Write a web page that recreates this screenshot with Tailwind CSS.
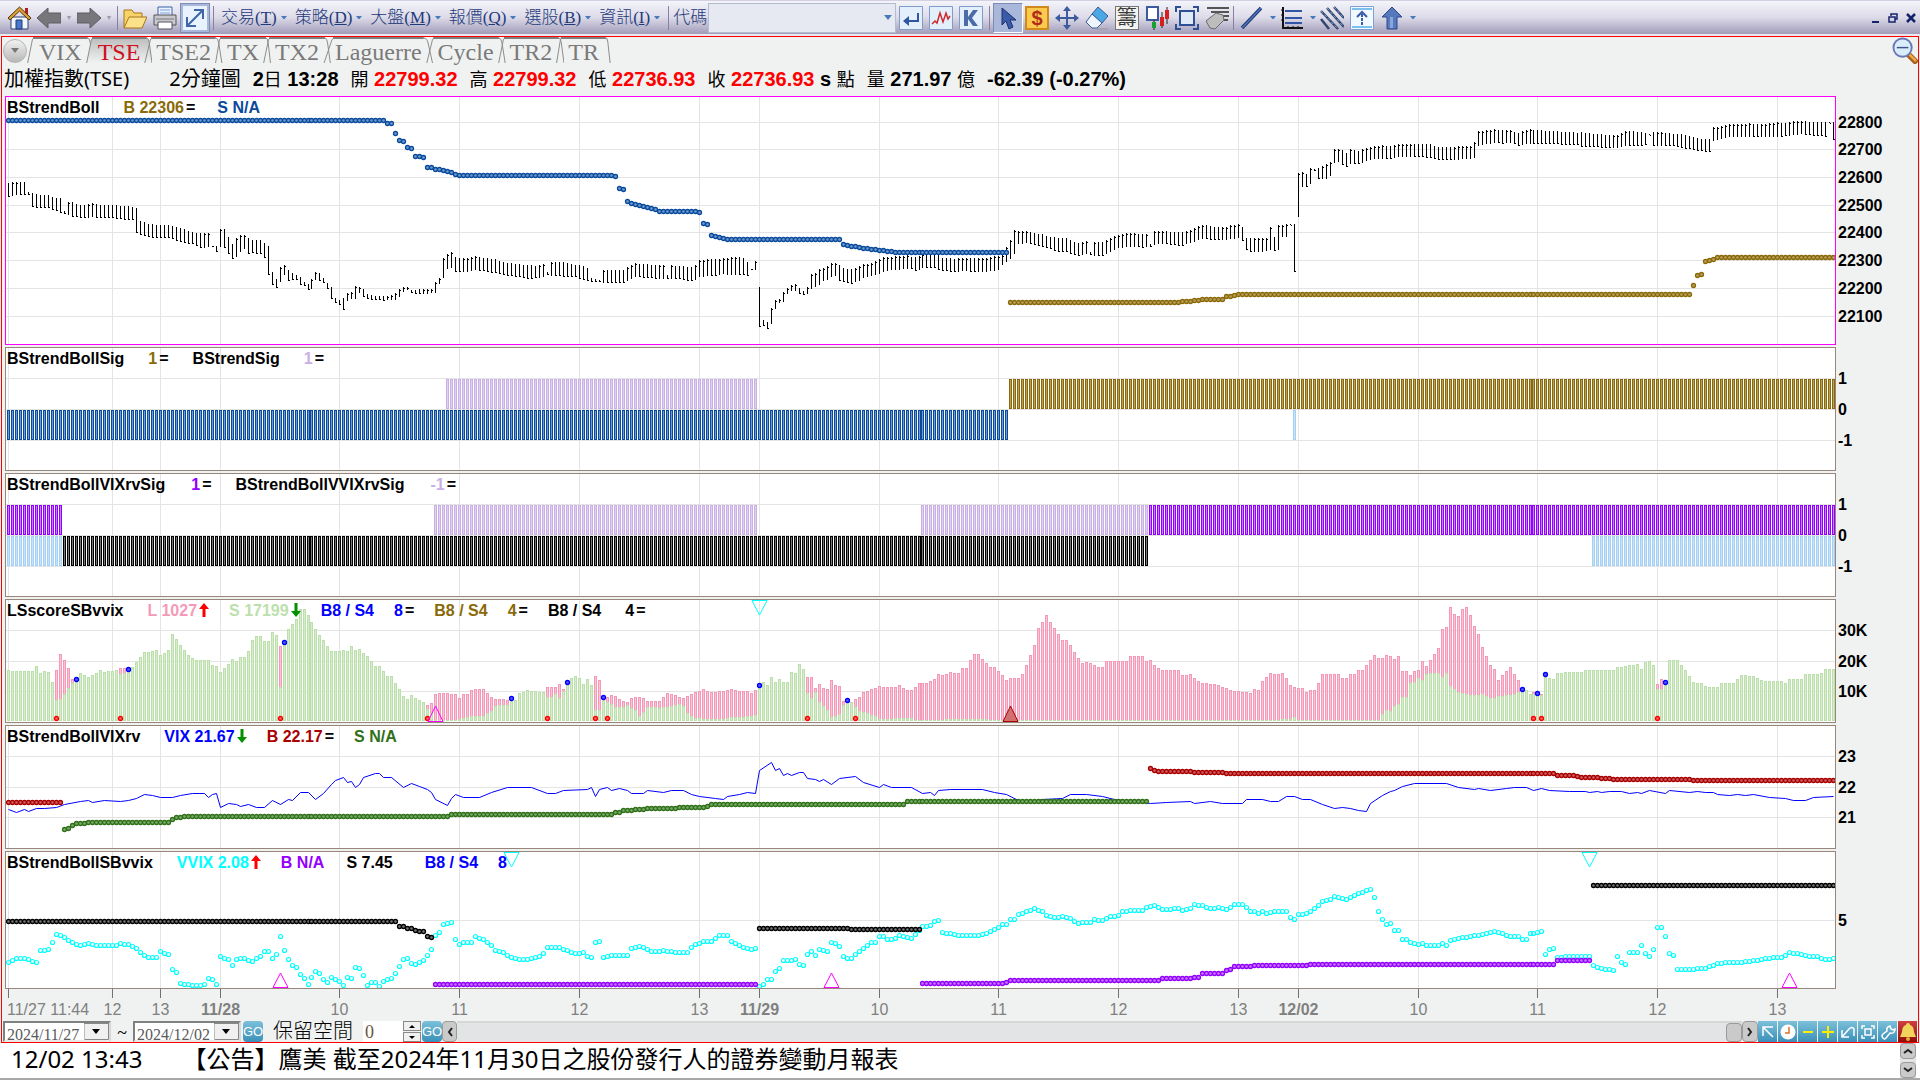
<!DOCTYPE html>
<html lang="zh-Hant">
<head>
  <meta charset="UTF-8">
  <title>加權指數(TSE)</title>
  <meta name="viewport" content="width=device-width, initial-scale=1">
  <script src="https://cdn.jsdelivr.net/npm/@tailwindcss/browser@4"></script>
</head>
<body class="min-h-screen bg-[#f0f2f1] text-black font-['Liberation_Sans','Noto_Sans_CJK_TC',sans-serif] overflow-x-hidden">

  <!-- ========== TOOLBAR ========== -->
  <header class="h-9 flex items-center pl-[7px] pr-1 border-t border-[#d4d0e4] bg-linear-to-b from-[#f4f4fa] via-[#dcdbe8] to-[#a29cba] text-[#1f3a7a] border-b-2 border-b-[#e8e8ee] font-['Liberation_Serif','Noto_Sans_CJK_TC',serif]">
    <button aria-label="Home" class="w-6 h-6 shrink-0">
      <svg viewBox="0 0 24 24" class="size-6"><path d="M18 2h3v7h-3z" fill="#b02020"/><path d="M4 11h17v12H4z" fill="#f4f6fb" stroke="#28427c"/><path d="M12.500 1L24 12l-2 2-9.500-9L3 14l-2-2z" fill="#e0a030" stroke="#4a3410"/><path d="M9 14h6v9H9z" fill="#4a78c8" stroke="#1d3a7c"/></svg>
    </button>
    <button aria-label="Back" class="w-6 h-6 ml-1.5 shrink-0"><svg viewBox="0 0 24 24" class="size-6"><path d="M0 12L11 2v5h13v10H11v5z" fill="#77777b" stroke="#5c5c62"/></svg></button>
    <span class="w-4 text-center text-[8px] text-[#9a9aa6] font-['DejaVu_Sans']">▾</span>
    <button aria-label="Forward" class="w-6 h-6 shrink-0"><svg viewBox="0 0 24 24" class="size-6"><path d="M24 12L13 2v5H0v10h13v5z" fill="#77777b" stroke="#5c5c62"/></svg></button>
    <span class="w-4 text-center text-[8px] text-[#9a9aa6] font-['DejaVu_Sans']">▾</span>
    <span class="w-px h-6 bg-[#8880a4] mr-[5px]"></span>
    <button aria-label="Open" class="w-6 h-6 shrink-0"><svg viewBox="0 0 24 24" class="size-6"><path d="M1 22V4h8l2 3h8v4" fill="#f8d468" stroke="#a8741c"/><path d="M1 22L6 11h18l-5 11z" fill="#fbe28a" stroke="#a8741c"/></svg></button>
    <button aria-label="Print" class="w-6 h-6 ml-1.5 shrink-0"><svg viewBox="0 0 24 24" class="size-6"><path d="M5 1h14v9H5z" fill="#eaf2ff" stroke="#3a62a8"/><path d="M7 4h10M7 7h10" stroke="#7aa0d8"/><path d="M1 9h22v10H1z" fill="#c9c9cd" stroke="#55555c"/><path d="M5 16h14v7H5z" fill="#fff" stroke="#55555c"/><path d="M3 13h18" stroke="#77777e"/></svg></button>
    <button aria-label="Fit" class="w-[30px] h-[30px] ml-[3px] grid place-items-center bg-[#a9b8da] border border-[#7d8cb4] shrink-0"><svg viewBox="0 0 24 24" class="size-6"><path d="M0 0h24v24H0z" fill="#e9f3ff"/><path d="M5 19L19 5M11 4h9v9M4 11v9h9" fill="none" stroke="#3f66a8" stroke-width="2"/></svg></button>
    <span class="w-px h-6 bg-[#8880a4] ml-[3px] mr-[7px]"></span>

    <nav class="flex text-[17px] font-light whitespace-nowrap" id="menus"></nav>

    <span class="w-px h-6 bg-[#8880a4] mr-1"></span>
    <label for="code" class="text-[17px] font-light whitespace-nowrap">代碼</label>
    <span class="relative w-[188px] h-[30px] ml-px shrink-0">
      <input id="code" class="w-full h-full bg-[#e6e9f2] border border-[#b4bccf] px-2 outline-none">
      <svg viewBox="0 0 8 5" class="absolute right-1 top-3 w-2"><path d="M0 0h8L4 5z" fill="#4a7ab8"/></svg>
    </span>
    <div class="flex items-center gap-1.5 ml-[3px] shrink-0">
      <button aria-label="Enter"><svg viewBox="0 0 24 24" class="size-6"><path d="M.5.5h23v23H.5z" fill="#e4effc" stroke="#7f9ccc"/><path d="M10 10v10l-6-5z" fill="#2f55a4"/><path d="M8 15h11V7" fill="none" stroke="#2f55a4" stroke-width="2"/></svg></button>
      <button aria-label="Tick chart"><svg viewBox="0 0 24 24" class="size-6"><path d="M.5.5h23v23H.5z" fill="#e4effc" stroke="#7f9ccc"/><path d="M3 18l3-3 2 2 3-10 3 9 3-9 2 6 2-3" fill="none" stroke="#cc2a2a" stroke-width="1.500"/></svg></button>
      <button aria-label="K line"><svg viewBox="0 0 24 24" class="size-6"><path d="M.5.5h23v23H.5z" fill="#e4effc" stroke="#7f9ccc"/><path d="M5 4h4v7l5-7h5l-6 8 6 8h-5l-5-7v7H5z" fill="#4a6aa8"/></svg></button>
      <span class="w-px h-6 bg-[#8880a4] -mr-[3px]"></span>
      <button aria-label="Select" class="w-[30px] h-[30px] grid place-items-center bg-[#a9b8da] border border-[#7d8cb4] border-b-white border-r-white -mr-1"><svg viewBox="0 0 24 24" class="size-6"><path d="M6 2v17l4-4 3 8 4-2-3-7h6z" fill="#3a5ba8" stroke="#1d3070"/></svg></button>
      <button aria-label="Trade"><svg viewBox="0 0 24 24" class="size-6"><path d="M1 1h22v22H1z" fill="#fbc94e" stroke="#d08a1c" stroke-width="2"/><text x="12" y="19" text-anchor="middle" font-family="Liberation Sans" font-size="20" font-weight="bold" fill="#b02c18">$</text></svg></button>
      <button aria-label="Move"><svg viewBox="0 0 24 24" class="size-6"><path d="M12 3v18M3 12h18" stroke="#3c5a9c" stroke-width="2"/><path d="M12 0l4 5H8zM12 24l4-5H8zM0 12l5-4v8zM24 12l-5-4v8z" fill="#3c5a9c"/></svg></button>
      <button aria-label="Eraser"><svg viewBox="0 0 24 24" class="size-6"><path d="M13 1l10 9-6 7L7 8z" fill="#4aa8e6" stroke="#3a5a90"/><path d="M7 8l10 9-5 5H7L1 16z" fill="#eef4fb" stroke="#3a5a90"/><path d="M11 23h12" stroke="#999"/></svg></button>
      <button class="w-6 h-6 bg-[#f2f2f0] border border-[#777] text-[20px] leading-[22px] text-[#3a3a3a] overflow-hidden"><span class="-ml-px">籌</span></button>
      <button aria-label="Candles"><svg viewBox="0 0 24 24" class="size-6"><path d="M2 1h11v13H2z" fill="#fff" stroke="#3c5a9c" stroke-width="2"/><path d="M9 14v10M17 6v16M22 1v17" stroke="#222"/><path d="M7 16h4v6H7z" fill="#18a030"/><path d="M15 11h4v9h-4zM20 4h4v9h-4z" fill="#d42020"/></svg></button>
      <button aria-label="Frame"><svg viewBox="0 0 24 24" class="size-6"><path d="M5 5h14v14H5z" fill="#dfe9f8" stroke="#2f4f94" stroke-width="2"/><path d="M1 6V1h5M18 1h5v5M23 18v5h-5M6 23H1v-5" fill="none" stroke="#2f4f94" stroke-width="2"/></svg></button>
      <button aria-label="Notify"><svg viewBox="0 0 24 24" class="size-6"><path d="M2 2h22M6 6h18M12 10h12M17 14h6" stroke="#555" stroke-width="2"/><path d="M1 15L11 7l7 2 1 5-9 9-5-1z" fill="#bdbdbd" stroke="#6b6b6b"/></svg></button>
      <span class="w-px h-6 bg-[#8880a4] -ml-0.5"></span>
      <button aria-label="Trend line"><svg viewBox="0 0 24 24" class="size-6"><path d="M2 22L21 2" stroke="#20386c" stroke-width="3.500"/><path d="M2 22L21 2" stroke="#4c74c0" stroke-width="1.500"/></svg></button>
      <svg viewBox="0 0 8 5" class="w-1.5 -mr-0.5"><path d="M0 0h8L4 5z" fill="#4a7ab8"/></svg>
      <button aria-label="Levels"><svg viewBox="0 0 24 24" class="size-6"><path d="M3 1v21h20" fill="none" stroke="#111" stroke-width="2"/><path d="M1 4h3M1 9h3M1 14h3M8 20v3M13 20v3M18 20v3" stroke="#111"/><path d="M5 5h17M5 12h17M5 17h17" stroke="#2f55a4" stroke-width="2"/></svg></button>
      <svg viewBox="0 0 8 5" class="w-1.5 -mr-0.5"><path d="M0 0h8L4 5z" fill="#4a7ab8"/></svg>
      <button aria-label="Channels"><svg viewBox="0 0 24 24" class="size-6"><path d="M1 5l17 18M7 2l17 19M14 1l10 11M1 13l8 10" stroke="#31466f" stroke-width="2.500"/><path d="M1 5l17 18M7 2l17 19M14 1l10 11" stroke="#86a0d0" stroke-width="1" stroke-dasharray="3 2"/></svg></button>
      <button aria-label="Zoom up"><svg viewBox="0 0 24 24" class="size-6"><path d="M.5.5h23v23H.5z" fill="#f2f8ff" stroke="#7fa0d4"/><path d="M2 3h20M2 21h20" stroke="#7cc0ee" stroke-width="2"/><path d="M7 11l5-5 5 5" fill="none" stroke="#3a5ba8" stroke-width="2"/><path d="M12 8v12" stroke="#3a5ba8" stroke-width="2" stroke-dasharray="3 1"/></svg></button>
      <button aria-label="Upload"><svg viewBox="0 0 24 24" class="size-6"><path d="M12 1l10 10h-5v12H7V11H2z" fill="#5678bc" stroke="#2b468c"/><path d="M10 11h3v11h-3z" fill="#88a5dc"/></svg></button>
      <svg viewBox="0 0 8 5" class="w-1.5"><path d="M0 0h8L4 5z" fill="#4a7ab8"/></svg>
    </div>
    <div class="flex items-center gap-2 ml-auto">
      <button aria-label="Minimize"><svg viewBox="0 0 9 10" class="w-[9px]"><path d="M1 8h7v2H1z" fill="#14246c"/></svg></button>
      <button aria-label="Restore"><svg viewBox="0 0 10 10" class="w-2.5"><path d="M3 3V1h6v5H7M1 4h6v5H1z" fill="none" stroke="#14246c" stroke-width="1.500"/></svg></button>
      <button aria-label="Close"><svg viewBox="0 0 10 10" class="w-2.5"><path d="M1 1l8 8M9 1L1 9" stroke="#14246c" stroke-width="2.500"/></svg></button>
    </div>
  </header>

  <!-- ========== CHART WINDOW ========== -->
  <main class="mx-px border border-[#ff0000]">
    <div class="h-[27px] flex items-center pl-px relative">
      <button aria-label="Tab list" class="size-6 rounded-full border border-[#b4b4b4] bg-linear-to-b from-[#f2f2f2] to-[#b8b8b8] grid place-items-center mr-1"><svg viewBox="0 0 8 5" class="w-2"><path d="M0 0h8L4 5z" fill="#777"/></svg></button>
      <nav id="tabs" class="flex h-full text-2xl leading-[30px] text-[#7a7a7a] font-['Liberation_Serif',serif]"></nav>
      <button aria-label="Zoom out" class="absolute right-0 top-0"><svg viewBox="0 0 28 28" class="size-[27px]"><path d="M18 18l9 9" stroke="#a8601c" stroke-width="6"/><path d="M19 18l7 7" stroke="#f0a848" stroke-width="2.500"/><circle cx="12" cy="11" r="9.500" fill="#d8ecfa" stroke="#6a78b4" stroke-width="2"/><path d="M6 11h12" stroke="#44518c" stroke-width="1.500"/></svg></button>
    </div>

    <div class="h-8 flex items-center gap-3 pl-0.5 pb-0.5 text-xl font-bold whitespace-nowrap">
      <h1 class="font-normal font-['Noto_Sans','Noto_Sans_CJK_TC',sans-serif] mr-7">加權指數(TSE)</h1>
      <span class="font-normal font-['Noto_Sans','Noto_Sans_CJK_TC',sans-serif]">2分鐘圖</span>
      <span>2<span class="text-lg font-normal">日</span> 13:28</span>
      <span><span class="text-lg font-normal">開</span> <span class="text-[#ff0000]">22799.32</span></span>
      <span><span class="text-lg font-normal">高</span> <span class="text-[#ff0000]">22799.32</span></span>
      <span><span class="text-lg font-normal">低</span> <span class="text-[#ff0000]">22736.93</span></span>
      <span><span class="text-lg font-normal">收</span> <span class="text-[#ff0000]">22736.93</span> s <span class="text-lg font-normal">點</span></span>
      <span><span class="text-lg font-normal">量</span> 271.97 <span class="text-lg font-normal">億</span></span>
      <span>-62.39 (-0.27%)</span>
    </div>

    <!-- panes are filled in by the script -->
    <div id="panes" class="flex flex-col gap-0.5 pl-[3px]"></div>

    <div class="pl-[3px] pr-[82px]">
      <svg id="timeAxis" class="block w-full h-8 overflow-visible text-base" fill="#808080"></svg>
    </div>

    <!-- range controls -->
    <div class="h-[21px] flex items-stretch pl-px font-['Liberation_Serif','Noto_Sans_CJK_TC',serif]">
      <span class="relative w-[108px] bg-white border-2 border-[#808080] border-r-[#d8d8d8] border-b-[#e8e8e8]">
        <select id="from" aria-label="From" class="appearance-none w-full h-full pl-0.5 pt-0.5 text-base leading-4 text-[#5a5a5a] outline-none"><option>2024/11/27</option></select>
        <svg viewBox="0 0 25 17" class="absolute right-0 top-0 w-[25px] h-[17px] pointer-events-none"><path d="M0 0h25v17H0z" fill="#f0f0f0"/><path d="M.5 16.500h24V0M0 16V.5h24" fill="none" stroke="#888"/><path d="M8 6h8l-4 5z"/></svg>
      </span>
      <span class="w-[22px] text-center text-lg leading-6">~</span>
      <span class="relative w-[108px] bg-white border-2 border-[#808080] border-r-[#d8d8d8] border-b-[#e8e8e8]">
        <select id="to" aria-label="To" class="appearance-none w-full h-full pl-0.5 pt-0.5 text-base leading-4 text-[#5a5a5a] outline-none"><option>2024/12/02</option></select>
        <svg viewBox="0 0 25 17" class="absolute right-0 top-0 w-[25px] h-[17px] pointer-events-none"><path d="M0 0h25v17H0z" fill="#f0f0f0"/><path d="M.5 16.500h24V0M0 16V.5h24" fill="none" stroke="#888"/><path d="M8 6h8l-4 5z"/></svg>
      </span>
      <button class="w-5 ml-0.5 bg-linear-to-b from-[#7cc0da] to-[#3a90b8] text-white text-[13px] leading-5 rounded-sm font-['Liberation_Sans']">GO</button>
      <label for="space" class="ml-2.5 mr-2.5 text-xl leading-[21px] font-light">保留空間</label>
      <input id="space" value="0" class="w-10 bg-white pl-0.5 text-lg leading-5 text-[#6a5540] outline-none">
      <span class="w-[18px] flex flex-col gap-px">
        <button aria-label="More" class="flex-1 grid place-items-center bg-[#f0f0f0] border border-[#888]"><svg viewBox="0 0 6 3" class="w-1.5"><path d="M0 3h6L3 0z"/></svg></button>
        <button aria-label="Less" class="flex-1 grid place-items-center bg-[#f0f0f0] border border-[#888]"><svg viewBox="0 0 6 3" class="w-1.5"><path d="M0 0h6L3 3z"/></svg></button>
      </span>
      <button class="w-5 ml-px bg-linear-to-b from-[#7cc0da] to-[#3a90b8] text-white text-[13px] leading-5 rounded-sm font-['Liberation_Sans']">GO</button>
      <button aria-label="Scroll left" class="w-[15px] grid place-items-center bg-[#cacaca] border border-[#9a9a9a] rounded-sm"><svg viewBox="0 0 6 10" class="w-1.5"><path d="M5 1L2 5l3 4" fill="none" stroke="#222" stroke-width="2"/></svg></button>
      <div class="flex-1 flex justify-end bg-[#e2e4e6] border-t-2 border-[#d4d6d8]"><span class="w-4 bg-[#cacaca] border border-[#9a9a9a] rounded-sm"></span></div>
      <button aria-label="Scroll right" class="w-4 grid place-items-center bg-[#cacaca] border border-[#9a9a9a] rounded-sm"><svg viewBox="0 0 6 10" class="w-1.5"><path d="M1 1l3 4-3 4" fill="none" stroke="#222" stroke-width="2"/></svg></button>
      <div class="flex gap-px pr-px">
        <button aria-label="Pointer" class="w-[19px] grid place-items-center bg-linear-to-b from-[#7cc0da] to-[#3a90b8]"><svg viewBox="0 0 16 16" class="size-4" fill="none" stroke="#fff" stroke-width="1.500"><path d="M3 12V3h10M4 4l9 9"/></svg></button>
        <button aria-label="Clock" class="w-[19px] grid place-items-center bg-linear-to-b from-[#7cc0da] to-[#3a90b8]"><svg viewBox="0 0 16 16" class="size-4"><circle cx="8" cy="8" r="7.500" fill="#fff"/><path d="M9 3v6H5" fill="none" stroke="#e07020" stroke-width="1.500"/></svg></button>
        <button aria-label="Narrower" class="w-[19px] grid place-items-center bg-linear-to-b from-[#7cc0da] to-[#3a90b8]"><svg viewBox="0 0 16 16" class="size-4"><path d="M3 8h10" stroke="#ffee00" stroke-width="2"/></svg></button>
        <button aria-label="Wider" class="w-[19px] grid place-items-center bg-linear-to-b from-[#7cc0da] to-[#3a90b8]"><svg viewBox="0 0 16 16" class="size-4"><path d="M2 8h12M8 2v12" stroke="#ffee00" stroke-width="2"/></svg></button>
        <button aria-label="Undo" class="w-[19px] grid place-items-center bg-linear-to-b from-[#7cc0da] to-[#3a90b8]"><svg viewBox="0 0 16 16" class="size-4" fill="none" stroke="#fff" stroke-width="1.500"><path d="M2 6v7h7M2 13l7-8q3-3 5 0v7"/></svg></button>
        <button aria-label="Fit window" class="w-[19px] grid place-items-center bg-linear-to-b from-[#7cc0da] to-[#3a90b8]"><svg viewBox="0 0 16 16" class="size-4" fill="none" stroke="#fff" stroke-width="1.500"><path d="M5 5h6v6H5zM2 5V2h3M11 2h3v3M14 11v3h-3M5 14H2v-3"/></svg></button>
        <button aria-label="Settings" class="w-[19px] grid place-items-center bg-linear-to-b from-[#7cc0da] to-[#3a90b8]"><svg viewBox="0 0 16 16" class="size-4" fill="none" stroke="#fff" stroke-width="1.500"><path d="M3 14q-2-2 0-4l4-3q-1-4 3-5l1 3 2 1 2-1q0 5-5 4l-4 5q-2 2-3 0z"/></svg></button>
        <button aria-label="Alarm" class="w-[19px] grid place-items-center bg-linear-to-b from-[#d04040] to-[#900808]"><svg viewBox="0 0 16 18" class="w-4"><path d="M8 0q2 0 2 2 4 1 4 7l2 5H0l2-5q0-6 4-7 0-2 2-2z" fill="#f2d45c"/><circle cx="8" cy="16" r="2" fill="#e0b030"/></svg></button>
      </div>
    </div>
  </main>

  <!-- ========== NEWS TICKER ========== -->
  <footer class="h-[37px] flex justify-between bg-white border-b-2 border-[#a8a8a8] pr-1 font-['Noto_Sans','Noto_Sans_CJK_TC',sans-serif]">
    <p class="pl-[11px] text-2xl leading-8 whitespace-nowrap"><span class="mr-10">12/02 13:43</span>【公告】鷹美 截至2024年11月30日之股份發行人的證券變動月報表</p>
    <div class="w-4 flex flex-col justify-between bg-[#e2e4e6]">
      <button aria-label="Previous" class="h-4 grid place-items-center bg-[#cacaca] border border-[#9a9a9a] rounded-sm"><svg viewBox="0 0 10 6" class="w-2.5"><path d="M1 5l4-3 4 3" fill="none" stroke="#222" stroke-width="2"/></svg></button>
      <button aria-label="Next" class="h-4 grid place-items-center bg-[#cacaca] border border-[#9a9a9a] rounded-sm"><svg viewBox="0 0 10 6" class="w-2.5"><path d="M1 1l4 3 4-3" fill="none" stroke="#222" stroke-width="2"/></svg></button>
    </div>
  </footer>

  <script>
    // ---- menus and tabs ----
    const menus = [['交易', 'T'], ['策略', 'D'], ['大盤', 'M'], ['報價', 'Q'], ['選股', 'B'], ['資訊', 'I']];
    document.getElementById('menus').innerHTML = menus.map(([t, k]) => `
      <button class="flex items-center mr-1.5">${t}(<u>${k}</u>)<svg viewBox="0 0 8 5" class="w-1.5 ml-1 mr-0.5"><path d="M0 0h8L4 5z" fill="#4a7ab8"/></svg></button>`).join('');

    const tabs = ['VIX', 'TSE', 'TSE2', 'TX', 'TX2', 'Laguerre', 'Cycle', 'TR2', 'TR'];
    document.getElementById('tabs').innerHTML = tabs.map(t => `
      <a href="#" class="relative px-2 ${t === 'TSE' ? 'text-[#d01020]' : ''}">
        <svg viewBox="0 0 100 26" preserveAspectRatio="none" class="absolute inset-y-0 -left-1 w-[calc(100%+8px)] h-[26px]" fill="${t === 'TSE' ? 'url(#tabOn)' : 'none'}">
          <defs><linearGradient id="tabOn" x2="0" y2="1"><stop stop-color="#bdbdbd"/><stop offset="1" stop-color="#f0f2f1"/></linearGradient></defs>
          <path d="M1 26L8 3q1-2 3-2h80q3 0 4 5l4 20" stroke="#8c8c8c" stroke-width="1" vector-effect="non-scaling-stroke"/>
          <path d="M9 1h82" stroke="#808080" stroke-width="2"/>
        </svg><span class="relative">${t}</span></a>`).join('');

    // ---- geometry: one bar every 4px, one pixel dropped every 153 bars ----
    const X = i => 8 + 4 * i - Math.floor((i + 77) / 153);
    const ticks = [[0, '11/27 11:44', 's'], [26, '12'], [38, '13'], [53, '11/28', 'b'], [83, '10'], [113, '11'], [143, '12'], [173, '13'],
      [188, '11/29', 'b'], [218, '10'], [248, '11'], [278, '12'], [308, '13'], [323, '12/02', 'b'], [353, '10'], [383, '11'], [413, '12'], [443, '13']];

    // "index value, index value, ..." -> key points
    const keys = s => s.trim().split(',').map(p => p.trim().split(' ').map(Number));

    // value at every bar between the first and last key point
    function fill(s) {
      const k = keys(s), out = [];
      for (let n = 0; n < k.length; n++) {
        const [i, ...v] = k[n], next = k[n + 1];
        out.push([i, ...v]);
        for (let j = i + 1; next && j < next[0]; j++) {
          const f = (j - i) / (next[0] - i);
          out.push([j, ...v.map((a, c) => a + (next[c + 1] - a) * f)]);
        }
      }
      return out;
    }

    // levels are kept in thirds of a pixel under the given origin
    const Y = (origin, v) => Math.round(origin + v / 3);

    function dots(s, origin, color, inner) {
      return fill(s).map(([i, v]) =>
        `<circle cx="${X(i) + .5}" cy="${Y(origin, v) + .5}" r="2" fill="${inner}" stroke="${color}" stroke-width="1.3"/>`).join('');
    }

    function columns(from, to, top, color, inner) {
      let out = '';
      for (let i = from; i <= to; i++) {
        out += `<rect x="${X(i) - 1}" y="${top}" width="3" height="30" fill="${color}"/><rect x="${X(i)}" y="${top + 1}" width="1" height="28" fill="${inner}"/>`;
      }
      return `<g shape-rendering="crispEdges">${out}</g>`;
    }

    function histogram(s, color, inner) {
      return `<g shape-rendering="crispEdges">` + fill(s).map(([i, v]) => {
        const y = Y(590, v);
        return `<rect x="${X(i) - 1}" y="${y}" width="3" height="${721 - y}" fill="${color}"/><rect x="${X(i)}" y="${y + 1}" width="1" height="${Math.max(0, 719 - y)}" fill="${inner}"/>`;
      }).join('') + '</g>';
    }

    function triangle(i, base, tip, color, inner) {
      return `<path d="M${X(i) - 7} ${base}h15L${X(i) + .5} ${tip}z" fill="${inner || 'none'}" stroke="${color}"/>`;
    }

    // ---- price bars: index high low ----
    const price = `0 279 322,1 277 318,2 276 314,4 276 314,5 306 314,6 309 350,7 313 353,10 316 355,11 322 360,13 325 368,14 363 372,15 337 374,16 337 380,17 343 382,
      19 346 384,21 340 382,23 345 384,26 345 385,28 347 388,30 349 389,31 352 390,32 354 428,33 393 435,34 397 438,35 402 442,37 404 445,40 406 443,42 410 452,44 418 460,
      46 426 463,48 430 475,50 430 472,51 468 471,52 468 485,53 417 472,54 417 475,55 441 493,56 462 508,57 445 500,58 435 485,59 436 478,60 445 493,61 450 490,63 450 493,
      64 458 503,65 468 556,66 546 585,67 567 593,68 530 575,69 526 555,70 540 572,72 556 570,73 560 584,74 575 588,75 582 600,76 567 597,77 546 570,78 550 572,79 565 580,
      80 578 597,81 590 628,82 624 638,83 630 645,84 625 659,85 608 633,86 605 627,87 588 626,88 590 610,89 597 620,90 613 628,92 617 630,94 618 632,96 615 630,97 608 630,
      98 598 622,99 592 607,100 591 600,101 600 610,103 598 613,105 598 612,106 597 608,107 576 608,108 563 583,109 503 563,110 492 538,111 486 535,112 500 545,113 504 546,
      115 503 546,117 498 541,119 503 543,122 508 550,124 516 556,127 522 560,130 525 566,132 527 565,134 521 560,135 545 556,136 515 558,139 516 560,142 525 562,144 527 570,
      145 535 573,146 563 576,148 571 577,149 540 579,154 540 580,155 532 573,157 520 560,159 522 563,162 525 566,164 524 566,165 555 567,166 525 567,168 528 567,170 530 573,
      171 530 573,172 525 570,173 510 562,175 507 558,177 507 558,179 505 553,182 500 555,184 503 555,185 515 558,186 537 540,187 513 540,188 590 711,189 690 708,190 696 717,
      191 655 702,192 630 657,193 627 638,194 606 636,195 594 612,196 585 603,197 582 603,198 594 612,199 603 615,200 591 612,201 552 597,202 548 590,203 538 585,204 534 573,
      205 527 570,206 519 560,207 519 558,208 525 573,209 534 575,210 537 578,211 537 582,212 535 576,213 529 573,214 523 565,216 519 557,218 506 552,219 500 545,221 500 540,
      224 497 538,225 495 536,226 500 538,227 500 543,229 493 535,232 495 535,233 493 540,234 503 543,237 506 546,240 503 543,242 503 546,245 503 545,248 497 540,249 495 525,
      250 470 516,251 450 507,252 420 492,253 423 462,255 422 460,257 428 464,259 433 470,261 440 478,263 443 486,265 445 486,266 450 492,268 460 497,270 453 492,271 487 495,
      272 456 497,274 456 497,276 443 485,278 435 475,280 430 471,282 430 470,284 432 473,285 432 471,286 462 470,287 423 464,289 423 462,292 427 466,294 427 467,296 420 459,
      298 408 450,299 404 446,301 408 450,303 412 450,305 410 450,306 405 446,308 402 445,309 411 452,310 443 480,311 445 486,313 444 486,315 444 483,316 410 480,317 441 482,318 405 480,
      319 405 442,320 403 442,321 402 404,322 402 546,323 249 382,324 246 290,325 251 292,326 234 281,327 236 242,328 233 268,330 222 266,331 217 257,332 177 219,333 177 216,
      334 181 224,335 189 230,336 177 223,338 182 223,340 174 212,342 169 207,344 165 206,346 168 207,348 163 200,351 162 200,354 162 201,356 162 204,358 171 210,361 172 210,
      363 168 209,366 167 206,367 156 204,368 123 167,370 121 163,372 117 159,374 120 161,376 121 159,378 128 167,381 117 161,383 120 161,386 123 163,388 123 163,390 126 166,
      393 128 165,394 126 170,396 130 171,398 131 172,401 135 175,403 134 174,405 123 167,408 125 167,410 129 166,411 133 136,412 126 169,414 126 167,417 131 169,419 133 174,
      421 139 177,423 145 182,425 147 186,426 147 186,427 112 152,429 108 148,431 102 142,434 101 140,436 100 140,438 102 140,440 101 140,443 96 140,445 99 139,447 94 135,
      449 93 133,452 96 137,454 96 137,455 97 140,456 97 99,457 97 149`;

    function priceBars() {
      let prev = 0;
      return '<g shape-rendering="crispEdges">' + fill(price).map(([i, hi, lo]) => {
        const t = Y(90, hi), b = Y(90, lo), close = (hi + lo) / 2 < prev ? t + 1 : b - 1;
        prev = (hi + lo) / 2;
        return `<rect x="${X(i)}" y="${t}" width="1" height="${Math.max(1, b - t)}"/><rect x="${X(i) + 1}" y="${close}" width="1" height="1"/>`;
      }).join('') + '</g>';
    }

    const green = `0 240,1 244,6 244,7 229,8 250,9 244,10 247,11 277,12 330,13 327,14 312,15 294,16 280,17 272,18 250,20 262,23 241,24 245,27 241,28 252,29 250,30 244,32 217,34 187,
      37 181,38 196,40 180,41 133,42 148,43 166,45 196,47 210,50 210,51 226,52 228,53 247,54 233,56 208,57 214,58 202,59 202,60 184,61 151,62 139,63 139,64 154,65 153,66 127,67 136,
      68 290,69 160,70 118,71 103,72 87,73 58,74 58,75 75,76 97,77 118,79 151,81 184,84 181,85 184,86 169,87 180,88 178,90 199,92 229,93 229,95 258,96 259,98 298,99 319,100 327,
      101 315,103 331,104 337,105 357,106 370,107 390,112 390,114 385,116 378,119 378,121 362,122 347,125 345,126 333,127 330,128 310,130 301,134 306,135 322,136 320,137 312,
      138 324,139 303,140 280,141 265,142 259,143 265,144 282,145 268,146 286,147 360,148 360,149 330,150 335,152 350,154 350,155 345,157 360,158 378,159 365,160 351,163 353,
      166 348,168 343,169 348,170 370,172 383,175 387,179 387,181 380,184 380,187 375,188 290,189 277,190 286,191 262,192 276,193 267,194 276,195 276,196 247,197 250,198 223,
      199 238,200 310,201 325,202 306,203 335,204 348,205 360,206 380,207 377,208 372,209 346,210 335,211 335,212 350,213 363,215 370,217 378,218 387,220 387,222 384,226 384,
      227 390,234 390,235 387,245 387,246 391,260 391,262 389,268 390,310 391,320 388,321 388,322 381,323 390,343 390,344 373,345 361,346 363,347 349,348 343,349 321,350 321,351 280,
      352 277,353 265,354 270,355 253,356 250,358 250,359 261,360 250,361 288,363 307,365 312,367 315,369 313,371 323,372 323,373 318,375 315,377 312,378 306,379 298,380 300,381 312,
      383 312,384 315,385 262,387 267,388 250,390 247,394 247,395 241,402 241,403 232,406 226,408 222,409 238,410 217,411 213,412 226,413 297,414 297,415 285,416 210,418 210,
      419 226,420 241,422 277,424 280,425 289,428 292,429 280,432 280,434 256,437 257,439 271,444 274,445 280,446 268,449 268,450 253,454 250,455 238,457 238`;
    const pink = ['12 241,13 193,14 211,15 235,16 268', '28 235,29 235', '68 169',
      '105 346,106 340,107 312,108 309,112 311,113 325,114 313,115 313,116 301,117 298,119 298,120 310,121 320,122 328,124 328,125 331',
      '135 292,137 290,138 283,139 298', '147 259,148 271',
      '150 322,151 316,152 317,153 328,155 337,156 325,157 322,158 322,159 324,160 334,163 334,165 310,167 316,169 325,170 318,172 306,174 298,176 306,179 303,181 297,183 303,185 303,186 310,187 300',
      '200 261,201 261,202 294,203 283,204 294,205 297,206 271,207 286,208 289,209 334',
      `212 328,213 321,214 307,216 298,218 289,222 292,223 286,225 300,226 300,228 280,230 279,232 267,233 253,234 255,236 247,237 250,238 250,239 235,240 235,241 211,242 193,243 193,
      244 208,246 232,247 232,249 256,250 270,251 265,253 264,254 252,255 226,256 196,257 166,258 115,259 97,260 76,261 97,263 133,264 151,265 151,266 166,268 205,269 220,270 217,
      271 220,273 230,274 232,275 213,280 213,281 199,284 199,285 213,286 211,287 226,289 240,293 240,294 256,296 253,297 265,299 280,302 281,304 290,306 300,308 303,311 309,
      312 298,313 300,314 273,316 250,317 253,319 250,320 265,321 286,323 295,324 295,325 306,326 300,327 300,328 280,329 253,333 253,334 265,335 265,336 252,337 252,338 241,
      339 241,341 211,342 196,343 205,344 205,345 196,346 199,347 208,348 199,349 244,350 244,351 256,352 244,353 241,354 213,355 229,356 211,357 193,358 175,359 118,360 112,
      361 52,362 73,363 79,364 58,365 52,366 76,367 109,368 133,369 172,370 199,371 226,372 238,373 270,374 256,376 232,377 252,378 271`,
      '382 306,383 306,384 313', '413 282,414 268'];

    const vix = `0 657,2 667,4 658,5 663,7 655,9 653,12 650,14 641,18 632,20 631,21 637,24 631,28 634,30 631,32 625,34 613,36 615,38 622,41 622,43 615,46 610,49 610,50 621,51 613,52 609,
      53 652,55 640,57 643,58 648,60 643,62 652,64 652,66 631,68 643,70 628,71 631,73 607,75 607,77 628,79 610,81 583,82 570,84 562,85 577,86 574,87 592,88 583,89 562,92 550,93 550,
      94 562,96 562,99 592,101 580,103 588,105 597,106 606,107 628,110 646,111 625,112 613,114 620,118 622,121 605,125 592,131 592,135 609,137 609,139 601,145 597,146 592,147 618,
      148 597,150 592,151 600,153 595,155 600,156 609,159 608,160 601,164 605,166 601,169 601,171 613,173 617,177 623,179 628,180 618,183 611,185 607,187 609,188 540,191 517,
      192 540,193 533,194 556,195 550,196 555,198 547,199 547,200 565,202 566,203 574,204 566,206 583,208 563,212 559,214 576,218 590,219 583,221 592,226 592,229 610,231 606,
      232 615,233 600,236 597,244 596,247 606,250 612,253 629,256 632,259 626,264 624,266 613,270 613,274 619,277 626,282 632,286 638,290 635,296 634,297 640,301 634,304 638,
      309 640,310 628,314 628,316 632,318 632,320 619,322 619,324 628,326 628,329 643,332 653,334 650,336 653,338 660,340 663,341 640,344 616,346 603,347 600,349 588,352 580,
      360 580,363 590,367 597,368 593,371 600,375 595,377 592,380 590,382 600,384 594,386 600,391 603,395 604,396 607,398 602,399 605,401 602,404 604,406 609,408 607,409 609,
      411 601,415 608,416 601,421 607,423 602,425 607,427 607,428 612,431 616,433 613,435 615,437 613,441 621,445 623,447 629,450 629,452 622,457 619`;

    const vvix = `0 1117,2 1103,4 1103,6 1112,7 1117,8 1081,10 1078,11 1057,12 1033,13 1036,14 1042,15 1051,16 1057,18 1066,20 1060,22 1066,27 1064,28 1060,30 1061,32 1075,33 1087,35 1102,
      37 1100,38 1084,40 1093,41 1138,42 1147,43 1178,45 1183,47 1186,49 1183,50 1163,51 1168,52 1183,53 1099,55 1108,56 1126,57 1108,58 1104,59 1105,61 1112,62 1105,63 1099,64 1084,
      65 1084,66 1105,67 1093,68 1039,69 1081,70 1108,71 1126,72 1132,73 1153,74 1165,75 1183,76 1162,77 1144,78 1150,79 1168,80 1177,81 1162,82 1168,83 1174,84 1186,85 1160,86 1165,
      87 1132,88 1135,89 1156,90 1186,91 1175,92 1177,93 1189,94 1172,95 1168,96 1165,97 1150,98 1129,99 1108,100 1105,101 1120,102 1123,103 1115,104 1111,105 1096,106 1078,107 1036,
      108 1027,109 1003,110 1000,111 997,112 1048,113 1063,114 1057,116 1055,117 1039,119 1048,121 1066,122 1081,124 1087,126 1102,128 1108,131 1105,133 1099,134 1090,135 1072,
      138 1070,139 1078,142 1088,144 1087,145 1099,146 1100,147 1057,148 1054,149 1102,151 1096,155 1094,156 1073,158 1067,159 1070,161 1084,164 1081,168 1087,170 1087,171 1072,172 1063,
      174 1054,176 1054,178 1036,180 1036,181 1054,183 1066,186 1078,187 1073,188 1189,189 1183,190 1168,191 1168,192 1144,193 1135,194 1111,196 1111,197 1108,198 1123,199 1126,
      200 1093,201 1084,202 1096,203 1078,205 1084,206 1057,207 1060,208 1069,209 1099,210 1105,211 1105,212 1093,214 1075,216 1057,217 1057,218 1039,219 1039,220 1048,222 1045,
      223 1036,226 1043,228 1020,229 1009,231 1006,232 994,233 991,234 1027,236 1030,238 1036,243 1036,245 1030,247 1018,249 1003,250 1003,251 988,252 988,253 973,255 964,257 955,
      258 961,259 964,260 976,262 982,264 979,266 984,268 1000,269 997,271 997,272 988,274 990,276 979,278 976,279 964,281 961,284 961,285 952,287 946,289 958,293 954,294 961,
      296 955,297 943,299 946,301 955,303 952,305 956,307 943,309 943,310 952,311 963,312 964,313 970,314 964,315 970,317 963,319 964,320 964,321 982,322 988,323 973,325 970,
      327 955,329 934,331 928,332 919,333 920,335 926,337 915,340 901,341 898,342 922,343 964,344 988,345 1003,346 1000,347 1021,348 1021,349 1048,350 1048,351 1057,353 1063,
      354 1060,355 1066,358 1066,359 1060,360 1066,361 1051,363 1043,367 1036,370 1030,372 1024,374 1030,376 1039,378 1039,379 1048,380 1048,381 1030,383 1027,384 1024,385 1093,
      386 1078,387 1075,388 1102,390 1098,396 1098,397 1126,399 1135,401 1136,402 1141,403 1099,404 1117,405 1123,406 1087,408 1087,409 1066,410 1090,411 1099,412 1078,413 1012,
      414 1012,415 1039,416 1090,417 1096,418 1138,420 1138,425 1133,428 1120,430 1117,434 1115,437 1111,440 1104,444 1100,446 1087,448 1088,450 1096,453 1099,455 1108,457 1105`;

    const C = {
      blue: ['#0a4a9c', '#6f9bd0'], gold: ['#8a6a08', '#b8a060'], violet: ['#9400ff', '#c67dff'], lav: ['#c8b0e4', '#e0d0f2'],
      sky: ['#a4d0f4', '#c8e2f8'], black: ['#000000', '#787878'], red: ['#a80000', '#d06060'], moss: ['#2f7018', '#7cac6c'],
      green: ['#bce0ac', '#d6ecca'], pink: ['#f49ab8', '#fac4d6']
    };
    const up = '<svg viewBox="0 0 10 14" class="inline w-2.5 h-3.5 ml-0.5 -mt-1"><path d="M5 0l5 6H6.500v8h-3V6H0z" fill="#ff0000"/></svg>';
    const down = '<svg viewBox="0 0 10 14" class="inline w-2.5 h-3.5 ml-0.5 -mt-1"><path d="M5 14l5-6H6.500V0h-3v8H0z" fill="#009000"/></svg>';
    const eq = '<span class="text-black ml-0.5">=</span>';

    // ---- panes ----
    const panes = [
      {
        top: 96, size: 'h-[249px]', edge: 'border-[#ff00ff]', gap: 'gap-[22px]',
        legend: [['BStrendBoll', 'mr-0.5'], ['B 22306' + eq, 'text-[#8a6a08]'], ['S N/A', 'text-[#0a4a9c]']],
        grid: [[122, '22800'], [149, '22700'], [177, '22600'], [205, '22500'], [232, '22400'], [260, '22300'], [288, '22200'], [316, '22100']],
        draw: () => priceBars() +
          dots('0 91,94 91,95 100,96 100,97 130,98 151,99 154,100 172,101 175,102 199,103 199,104 202,105 232,106 232,107 238,108 238,111 247,112 252,113 256,151 256,152 259,153 295,154 298,155 334,156 340,158 346,162 358,163 364,172 364,173 367,174 400,175 403,176 436,180 448,208 448,209 463,213 471,217 478,221 484,225 487,250 487', 90, ...C.blue) +
          dots('251 637,293 637,294 634,297 631,299 628,304 628,305 619,307 614,311 611,421 611,422 586,423 556,424 553,425 513,426 510,427 506,428 502,457 502', 90, ...C.gold)
      },
      {
        top: 347, size: 'h-[124px]', edge: 'border-[#98867a]', gap: 'gap-6',
        legend: [['BStrendBollSig', ''], ['1' + eq, 'text-[#8a6a08]'], ['BStrendSig', ''], ['1' + eq, 'text-[#c8b0e4]']],
        grid: [[378, '1'], [409, '0'], [440, '-1']],
        draw: () => columns(110, 187, 379, ...C.lav) + columns(0, 250, 410, ...C.blue) + columns(251, 457, 379, ...C.gold) + columns(322, 322, 410, ...C.sky)
      },
      {
        top: 473, size: 'h-[124px]', edge: 'border-[#98867a]', gap: 'gap-6',
        legend: [['BStrendBollVIXrvSig', 'mr-0.5'], ['1' + eq, 'text-[#9400ff]'], ['BStrendBollVVIXrvSig', 'mr-0.5'], ['-1' + eq, 'text-[#c8b0e4]']],
        grid: [[504, '1'], [535, '0'], [566, '-1']],
        draw: () => columns(0, 13, 505, ...C.violet) + columns(0, 13, 536, ...C.sky) + columns(14, 285, 536, ...C.black) +
          columns(107, 187, 505, ...C.lav) + columns(229, 285, 505, ...C.lav) + columns(286, 457, 505, ...C.violet) + columns(397, 457, 536, ...C.sky)
      },
      {
        top: 599, size: 'h-[124px]', edge: 'border-[#98867a]', gap: 'gap-5',
        legend: [['LSscoreSBvvix', 'mr-1'], ['L 1027' + up, 'text-[#f49ab8]'], ['S 17199' + down, 'text-[#bce0ac]'], ['B8 / S4', 'text-[#0000ff]'], ['8' + eq, 'text-[#0000ff]'],
          ['B8 / S4', 'text-[#8a6a08]'], ['4' + eq, 'text-[#8a6a08]'], ['B8 / S4', 'mr-1'], ['4' + eq, '']],
        grid: [[630, '30K'], [661, '20K'], [691, '10K']],
        draw: () => pink.map(p => histogram(p, ...C.pink)).join('') + histogram(green, ...C.green) +
          [12, 28, 68, 105, 135, 147, 150, 200, 212, 382, 384, 413].map(i => dots(i + ' 385', 590, '#ff0000', '#ff6060')).join('') +
          ['17 268', '30 238', '69 157', '126 325', '140 277', '149 320', '188 286', '210 331', '379 298', '383 310', '385 253', '415 277'].map(p => dots(p, 590, '#0000ff', '#5a5aff')).join('') +
          triangle(107, 721.5, 706, '#ff00ff') + triangle(251, 721.5, 706, '#a80000', '#d07070') + triangle(188, 600.5, 615, '#00ffff')
      },
      {
        top: 725, size: 'h-[124px]', edge: 'border-[#98867a]', gap: 'gap-5',
        legend: [['BStrendBollVIXrv', 'mr-1'], ['VIX 21.67' + down, 'text-[#0000ff]'], ['B 22.17' + eq, 'text-[#a80000]'], ['S N/A', 'text-[#2f7018]']],
        grid: [[756, '23'], [787, '22'], [817, '21']],
        draw: () => `<polyline fill="none" stroke="#0000ff" stroke-width="1" points="${keys(vix).map(([i, v]) => `${X(i) + .5},${Y(590, v) + .5}`).join(' ')}"/>` +
          dots('0 637,13 637', 590, ...C.red) + dots('286 535,287 541,289 544,296 544,297 547,304 547,306 550,387 550,388 555,392 556,394 560,397 562,401 563,402 566,420 566,424 571,457 571', 590, ...C.red) +
          dots('14 718,15 715,16 706,17 700,20 697,40 697,41 688,42 682,44 677,110 677,111 673,151 673,152 667,153 666,154 660,158 657,162 653,173 652,174 650,176 643,224 643,225 634,285 634', 590, ...C.moss)
      },
      {
        top: 851, size: 'h-[138px]', edge: 'border-[#98867a]', gap: 'gap-5',
        legend: [['BStrendBollSBvvix', 'mr-1'], ['VVIX 2.08' + up, 'text-[#00ffff]'], ['B N/A', 'text-[#9400ff] mr-0.5'], ['S 7.45', 'mr-3'], ['B8 / S4', 'text-[#0000ff]'], ['8', 'text-[#0000ff]']],
        grid: [[920, '5']],
        draw: () => fill(vvix).map(([i, v]) => `<circle cx="${X(i) + .5}" cy="${Y(590, v) + .5}" r="2" fill="none" stroke="#00ffff" stroke-width="1.2"/>`).join('') +
          dots('0 994,97 994,98 1009,99 1009,100 1015,101 1015,102 1021,104 1024,105 1039,106 1042', 590, ...C.black) + dots('188 1015,210 1015,211 1018,228 1018', 590, ...C.black) + dots('397 886,457 886', 590, ...C.black) +
          dots('107 1183,187 1183', 590, ...C.violet) +
          dots('229 1180,249 1180,250 1175,251 1171,288 1171,289 1165,296 1165,297 1160,298 1160,299 1150,304 1150,305 1140,306 1138,307 1129,311 1129,312 1126,325 1126,326 1123,387 1123,388 1111,396 1111', 590, ...C.violet) +
          [68, 206, 446].map(i => triangle(i, 987.5, 973, '#ff00ff')).join('') + [126, 396].map(i => triangle(i, 852.5, 867, '#00ffff')).join('')
      }
    ];

    // height of a pane in view units, taken from its size class
    const heightOf = p => parseInt(p.size.slice(3));

    document.getElementById('panes').innerHTML = panes.map(p => {
      const h = heightOf(p);
      const lines = ticks.map(([i]) => `<rect x="${X(i)}" y="${p.top}" width="1" height="${h}"/>`).join('') +
        p.grid.map(([y]) => `<rect x="6" y="${y}" width="1829" height="1"/>`).join('');
      return `
        <section class="flex ${p.size}">
          <div class="relative flex-1 border ${p.edge} bg-white">
            <svg viewBox="6 ${p.top + 1} 1829 ${h - 2}" preserveAspectRatio="none" class="block w-full h-full">
              <g fill="#e4e4e4" shape-rendering="crispEdges">${lines}</g>${p.draw()}
            </svg>
            <div class="absolute left-px top-0 flex ${p.gap} text-base leading-[21px] font-bold whitespace-nowrap">
              ${p.legend.map(([t, c]) => `<span class="${c}">${t}</span>`).join('')}
            </div>
          </div>
          <svg class="w-[82px] h-full overflow-visible text-base font-bold">
            ${p.grid.map(([y, t]) => `<text x="2" y="${y - p.top + 6}">${t}</text>`).join('')}
          </svg>
        </section>`;
    }).join('');

    // ---- time axis ----
    document.getElementById('timeAxis').innerHTML = ticks.map(([i, t, kind]) => {
      const left = ((X(i) + .5 - 5) / 1831 * 100).toFixed(3) + '%';
      return `<line x1="${left}" x2="${left}" y1="0" y2="9" stroke="#707070"/>
        <text x="${kind === 's' ? '2' : left}" y="26" text-anchor="${kind === 's' ? 'start' : 'middle'}" font-weight="${kind === 'b' ? 'bold' : 'normal'}">${t}</text>`;
    }).join('');
  </script>
</body>
</html>
